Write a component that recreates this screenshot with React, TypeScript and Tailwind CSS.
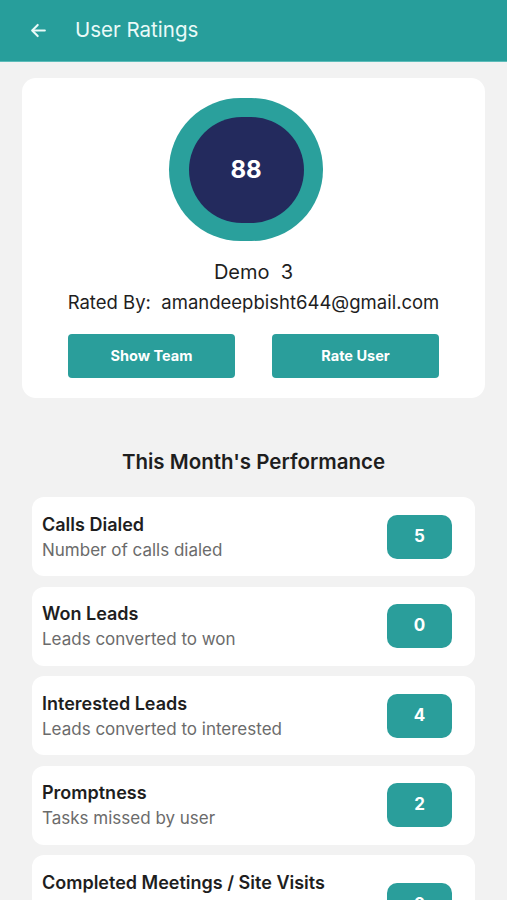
import React from "react";

const rows = [
  { title: "Calls Dialed", sub: "Number of calls dialed", value: "5" },
  { title: "Won Leads", sub: "Leads converted to won", value: "0" },
  { title: "Interested Leads", sub: "Leads converted to interested", value: "4" },
  { title: "Promptness", sub: "Tasks missed by user", value: "2" },
  { title: "Completed Meetings / Site Visits", sub: "Meetings and site visits completed by user", value: "0" },
];

export default function App() {
  return (
    <div className="w-[507px] h-[900px] overflow-hidden bg-[#f2f2f2]" style={{ fontFamily: "Inter, Roboto, 'Noto Sans', sans-serif" }}>
      <header className="h-[62px] bg-[#279e9b] flex items-center border-b border-[#5cbcb9]">
        <svg className="ml-[29px]" width="19" height="19" viewBox="0 0 24 24" fill="none" stroke="#eafaf8" strokeWidth="2.6" strokeLinecap="round" strokeLinejoin="round">
          <path d="M20 12H5" />
          <path d="M11 5l-7 7 7 7" />
        </svg>
        <span className="ml-[27px] text-[20.5px] text-[#eafaf8]">User Ratings</span>
      </header>

      <div className="mx-[22px] mt-[16px] bg-white rounded-[14px] h-[320px] flex flex-col items-center">
        <div className="mt-[20px] mr-[15px] w-[154px] h-[143px] rounded-full bg-[#2aa09c] flex items-center justify-center">
          <div className="w-[115px] h-[106px] rounded-full bg-[#232a5d] flex items-center justify-center">
            <span className="text-white text-[24px] font-bold">88</span>
          </div>
        </div>
        <div className="mt-[19px] text-[20px] text-[#1e1e1e] leading-[24px] whitespace-pre">Demo  3</div>
        <div className="mt-[7px] text-[18.5px] text-[#1e1e1e] leading-[22px] whitespace-pre">Rated By:  amandeepbisht644@gmail.com</div>
        <div className="mt-[21px] w-[371px] flex justify-between">
          <button className="w-[167px] h-[44px] rounded-[4px] bg-[#2a9e9b] text-white text-[14.5px] font-bold">Show Team</button>
          <button className="w-[167px] h-[44px] rounded-[4px] bg-[#2a9e9b] text-white text-[14.5px] font-bold">Rate User</button>
        </div>
      </div>

      <h2 className="mt-[51px] text-center text-[20.5px] font-semibold text-[#1e1e1e] leading-[26px]">This Month's Performance</h2>

      <div className="mt-[22px] mx-[32px] flex flex-col gap-[10.5px]">
        {rows.map((r) => (
          <div key={r.title} className="py-[16.5px] bg-white rounded-[12px] flex items-center justify-between pl-[10px] pr-[23px]">
            <div className="flex flex-col max-w-[330px]">
              <span className="text-[18px] font-semibold text-[#1e1e1e] leading-[22px]">{r.title}</span>
              <span className="mt-[4px] text-[17px] text-[#6b6b6b] leading-[20px]">{r.sub}</span>
            </div>
            <div className="w-[65px] h-[44px] rounded-[10px] bg-[#2a9e9b] flex items-center justify-center text-white text-[17px] font-bold">
              {r.value}
            </div>
          </div>
        ))}
      </div>
    </div>
  );
}
